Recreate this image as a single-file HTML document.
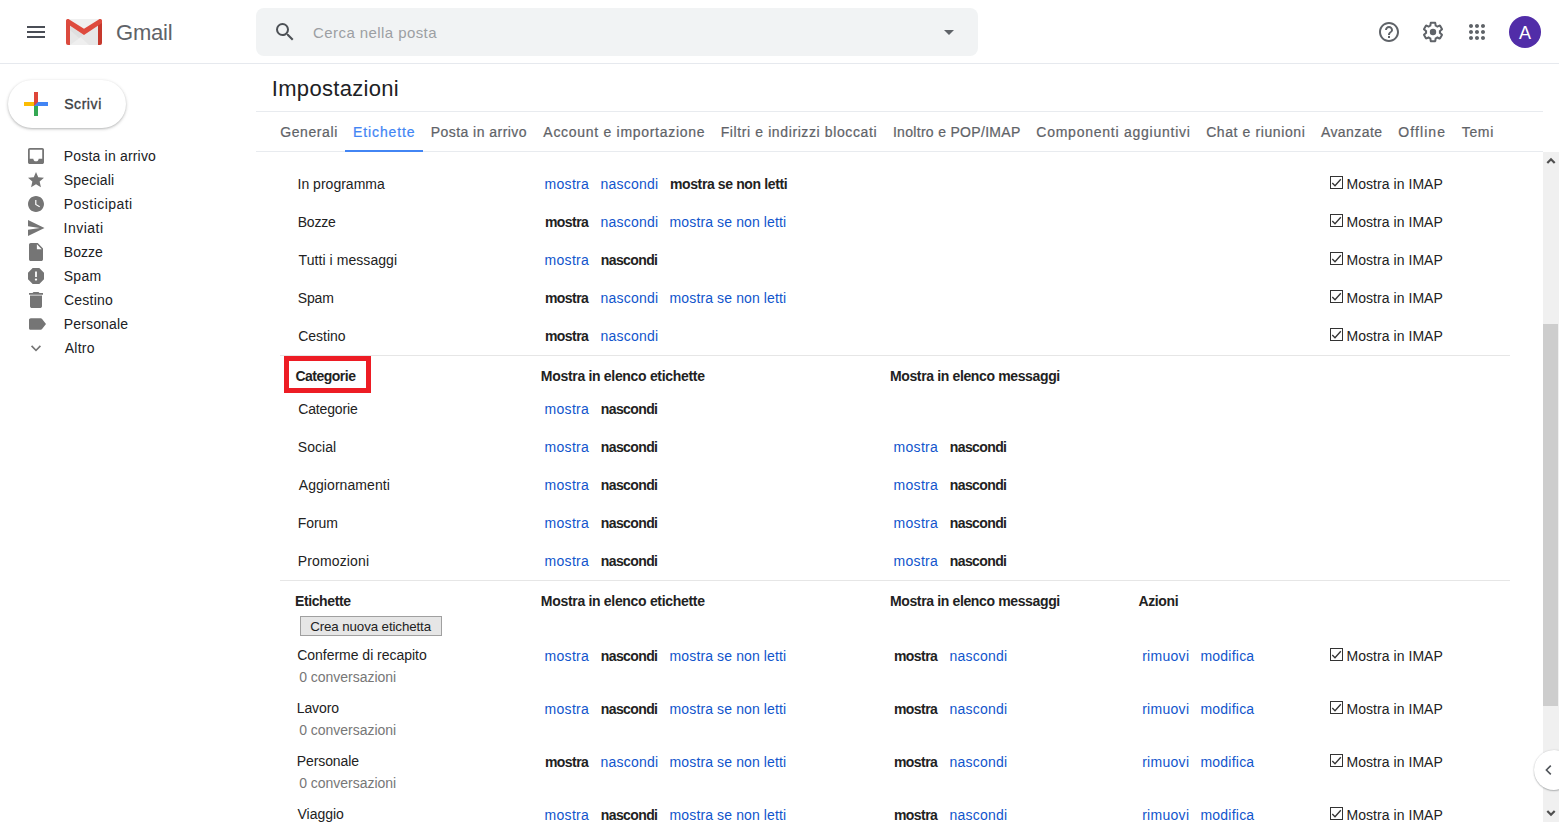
<!DOCTYPE html>
<html lang="it">
<head>
<meta charset="utf-8">
<title>Impostazioni - Gmail</title>
<style>
*{box-sizing:border-box;margin:0;padding:0}
html,body{width:1559px;height:822px;overflow:hidden;background:#fff}
body{position:relative;font-family:"Liberation Sans",Arial,sans-serif;font-size:14px;color:#202124}
.abs{position:absolute}
.t{position:absolute;white-space:nowrap;line-height:20px;height:20px;font-size:14px}
.med{-webkit-text-stroke:0.22px currentColor}
#hdr{position:absolute;left:0;top:0;width:1559px;height:64px;border-bottom:1px solid #e6e9ee}
#search{position:absolute;left:256px;top:8px;width:722px;height:48px;border-radius:8px;background:#f1f3f4}
.c-gm{color:#5f6368}
.c-ph{color:#9c9fa3}
.c-scrivi{color:#3c4043;-webkit-text-stroke:0.35px currentColor}
.c-title{color:#202124}
#avatar{position:absolute;left:1509px;top:16px;width:32px;height:32px;border-radius:50%;background:#512da8;color:#fff;font-size:18px;line-height:32px;text-align:center;padding-top:1px}
#compose{position:absolute;left:8px;top:80px;width:118px;height:48px;border-radius:24px;background:#fff;box-shadow:0 1px 2px 0 rgba(60,64,67,.26),0 1px 3px 1px rgba(60,64,67,.11)}
.nav{color:#202124}
.hl{position:absolute;height:1px;background:#e8ebef}
.tab{color:#5f6368}
.tab.on{color:#4285f4}
#tabline{position:absolute;left:345px;top:150px;width:78px;height:2px;background:#4285f4}
.r{color:#222}
.l{color:#15c}
.b{font-weight:bold;color:#222}
.g{color:#777}
.cb{position:absolute;left:1330px;width:13px;height:13px;border:1px solid #333;background:#fff}
.cb svg{position:absolute;left:-1px;top:-1px}
#newbtn{position:absolute;left:300px;top:616px;width:142px;height:20px;border:1px solid #a0a0a0;background:#e6e6e6}
#redbox{position:absolute;left:284px;top:356px;width:87px;height:37px;border:5px solid #ed1c24}
#sb{position:absolute;left:1543px;top:152px;width:16px;height:670px;background:#f0f0f0}
#thumb{position:absolute;left:0;top:172px;width:15px;height:382px;background:#cdcdcd}
#side{position:absolute;left:1534px;top:750px;width:40px;height:40px;border-radius:20px;background:#fff;box-shadow:0 1px 1.5px 0 rgba(60,64,67,.32),0 0 1.5px 0 rgba(60,64,67,.22)}
</style>
</head>
<body>
<div id="hdr"></div>
<svg class="abs" style="left:24px;top:20px" width="24" height="24" viewBox="0 0 24 24"><path fill="#4a4e56" d="M3 18h18v-2H3v2zm0-5h18v-2H3v2zm0-7v2h18V6H3z"/></svg>
<svg class="abs" style="left:66px;top:19px" width="36" height="26" viewBox="0 0 36 26">
<rect x="0.500" y="0" width="35" height="26" rx="2" fill="#f0f0f0"/>
<path d="M4 6.700 L18 16.100 L32 6.700 V26 H4 Z" fill="#e7e7e7"/>
<path d="M4 7 L17 16 L13 19 L4 11 Z" fill="#dcdcdc" opacity=".7"/>
<path d="M4 26 L14.700 18.300 L23 26 Z" fill="#efefef"/>
<path d="M0 2.200 Q0 0 2.200 0 L4 1.500 V26 H2 Q0 26 0 24 Z" fill="#db4a3e"/>
<path d="M36 2.200 Q36 0 33.800 0 L32 1.500 V26 H34 Q36 26 36 24 Z" fill="#c6392d"/>
<path d="M0.600 0.700 Q1.800 -0.400 3.200 0.500 L18 9.800 L32.800 0.500 Q34.200 -0.400 35.400 0.700 Q36 1.300 36 2.200 L36 4 L18 16.100 L0 4 L0 2.200 Q0 1.300 0.600 0.700 Z" fill="#de4b3e"/>
</svg>
<div id="search"></div>
<svg class="abs" style="left:273px;top:20px" width="24" height="24" viewBox="0 0 24 24"><path fill="#4d5156" d="M15.500 14h-.79l-.28-.27A6.471 6.471 0 0 0 16 9.500 6.500 6.500 0 1 0 9.500 16c1.610 0 3.090-.59 4.230-1.570l.27.28v.79l5 4.990L20.490 19l-4.990-5zm-6 0C7.010 14 5 11.990 5 9.500S7.010 5 9.500 5 14 7.010 14 9.500 11.990 14 9.500 14z"/></svg>
<svg class="abs" style="left:937px;top:20px" width="24" height="24" viewBox="0 0 24 24"><path fill="#5f6368" d="M7 10l5 5 5-5z"/></svg>
<svg class="abs" style="left:1377px;top:20px" width="24" height="24" viewBox="0 0 24 24"><path fill="#5f6368" d="M11 18h2v-2h-2v2zm1-16C6.480 2 2 6.480 2 12s4.480 10 10 10 10-4.480 10-10S17.520 2 12 2zm0 18c-4.410 0-8-3.590-8-8s3.590-8 8-8 8 3.590 8 8-3.590 8-8 8zm0-14c-2.210 0-4 1.790-4 4h2c0-1.100.9-2 2-2s2 .9 2 2c0 2-3 1.750-3 5h2c0-2.250 3-2.500 3-5 0-2.210-1.790-4-4-4z"/></svg>
<svg class="abs" style="left:1421px;top:20px" width="24" height="24" viewBox="0 0 24 24"><path fill="#5f6368" d="M13.850 22.250h-3.700c-.74 0-1.360-.54-1.450-1.270l-.27-1.890c-.27-.14-.53-.29-.79-.46l-1.800.72c-.7.260-1.470-.03-1.810-.65L2.200 15.530c-.35-.66-.2-1.440.36-1.880l1.530-1.190c-.01-.15-.02-.3-.02-.46 0-.15.010-.31.020-.46l-1.520-1.190c-.59-.45-.74-1.260-.37-1.880l1.850-3.190c.34-.62 1.110-.9 1.790-.63l1.810.73c.26-.17.520-.32.780-.46l.27-1.910c.09-.7.710-1.250 1.440-1.250h3.700c.74 0 1.360.54 1.450 1.270l.27 1.890c.27.140.53.290.79.460l1.800-.72c.71-.26 1.480.03 1.820.65l1.840 3.180c.36.660.2 1.440-.36 1.880l-1.520 1.190c.1.150.2.300.2.460s-.1.310-.2.460l1.520 1.190c.56.450.72 1.230.37 1.860l-1.860 3.220c-.34.620-1.110.9-1.800.63l-1.800-.72c-.26.170-.52.320-.78.460l-.27 1.910c-.1.680-.72 1.220-1.460 1.220zm-3.230-2h2.760l.37-2.550.53-.22c.44-.18.880-.44 1.340-.78l.45-.34 2.380.96 1.380-2.400-2.030-1.580.07-.56c.03-.26.060-.51.060-.78s-.03-.53-.06-.78l-.07-.56 2.030-1.580-1.390-2.400-2.390.96-.45-.35c-.42-.32-.87-.58-1.330-.77l-.52-.22-.37-2.550h-2.760l-.37 2.550-.53.210c-.44.190-.88.440-1.340.79l-.45.330-2.380-.95-1.390 2.390 2.030 1.580-.07.560a7 7 0 0 0-.06.790c0 .26.020.53.060.78l.07.560-2.030 1.580 1.380 2.400 2.390-.96.450.35c.43.330.86.580 1.330.77l.53.220.38 2.550z"/><circle fill="#5f6368" cx="12" cy="12" r="3.200"/></svg>
<svg class="abs" style="left:1465px;top:20px" width="24" height="24" viewBox="0 0 24 24"><path fill="#5f6368" d="M6,8c1.100,0 2,-0.900 2,-2s-0.900,-2 -2,-2 -2,0.900 -2,2 0.900,2 2,2zM12,20c1.100,0 2,-0.900 2,-2s-0.900,-2 -2,-2 -2,0.900 -2,2 0.900,2 2,2zM6,20c1.100,0 2,-0.900 2,-2s-0.900,-2 -2,-2 -2,0.900 -2,2 0.900,2 2,2zM6,14c1.100,0 2,-0.900 2,-2s-0.900,-2 -2,-2 -2,0.900 -2,2 0.900,2 2,2zM12,14c1.100,0 2,-0.900 2,-2s-0.900,-2 -2,-2 -2,0.900 -2,2 0.900,2 2,2zM16,6c0,1.100 0.900,2 2,2s2,-0.900 2,-2 -0.900,-2 -2,-2 -2,0.900 -2,2zM12,8c1.100,0 2,-0.900 2,-2s-0.900,-2 -2,-2 -2,0.900 -2,2 0.900,2 2,2zM18,14c1.100,0 2,-0.900 2,-2s-0.900,-2 -2,-2 -2,0.900 -2,2 0.900,2 2,2zM18,20c1.100,0 2,-0.900 2,-2s-0.900,-2 -2,-2 -2,0.900 -2,2 0.900,2 2,2z"/></svg>
<div id="avatar">A</div>

<div id="compose">
<svg class="abs" style="left:16px;top:12px" width="24" height="24" viewBox="0 0 24 24"><path fill="#fbbc04" d="M0 10h10v4H0z"/><path fill="#4285f4" d="M10 10h14v4H10z"/><path fill="#34a853" d="M10 14h4v10h-4z"/><path fill="#de4639" d="M10 0h4v10l-4 4z"/></svg>
</div>
<svg class="abs" style="left:0;top:0" width="60" height="370" viewBox="0 0 60 370" fill="#757575"><path transform="matrix(0.8889 0 0 0.8889 25.333 145.333)" d="M19 3H4.990c-1.110 0-1.980.9-1.980 2L3 19c0 1.100.880 2 1.990 2H19c1.100 0 2-.9 2-2V5c0-1.100-.9-2-2-2zm0 12h-4c0 1.660-1.350 3-3 3s-3-1.340-3-3H4.990V5H19v10z"/><path transform="matrix(0.8000 0 0 0.8000 26.400 170.400)" d="M12 17.270L18.180 21l-1.640-7.030L22 9.240l-7.190-.61L12 2 9.190 8.630 2 9.240l5.460 4.730L5.820 21z"/><path transform="matrix(0.8000 0 0 0.8000 26.400 194.400)" d="M12 2C6.500 2 2 6.500 2 12s4.500 10 10 10 10-4.500 10-10S17.500 2 12 2zm4.200 14.200L11 13V7h1.500v5.200l4.500 2.700-.8 1.300z"/><path transform="matrix(0.7857 0 0 0.8889 26.429 217.333)" d="M2.010 21L23 12 2.010 3 2 10l15 2-15 2z"/><path transform="matrix(0.8750 0 0 0.9000 25.500 241.200)" d="M6 2c-1.100 0-1.990.9-1.990 2L4 20c0 1.100.890 2 1.990 2H18c1.100 0 2-.9 2-2V8l-6-6H6zm7 7V3.500L18.500 9H13z"/><path transform="matrix(0.8889 0 0 0.8889 25.333 265.333)" d="M15.730 3H8.270L3 8.270v7.460L8.270 21h7.460L21 15.730V8.270L15.730 3zM12 17.300c-.72 0-1.300-.58-1.300-1.300 0-.72.580-1.300 1.300-1.300.72 0 1.300.58 1.300 1.300 0 .72-.58 1.300-1.300 1.300zm1-4.300h-2V7h2v6z"/><path transform="matrix(1.0000 0 0 0.8889 24.000 289.333)" d="M6 19c0 1.100.9 2 2 2h8c1.100 0 2-.9 2-2V7H6v12zM19 4h-3.500l-1-1h-5l-1 1H5v2h14V4z"/><path transform="matrix(0.8947 0 0 0.8286 26.316 314.057)" d="M17.630 5.840C17.270 5.330 16.670 5 16 5L5 5.010C3.900 5.010 3 5.900 3 7v10c0 1.100.9 1.990 2 1.990L16 19c.67 0 1.270-.33 1.630-.84L22 12l-4.370-6.160z"/><path transform="matrix(0.8333 0 0 0.8367 26.000 338.113)" d="M16.590 8.590L12 13.170 7.410 8.590 6 10l6 6 6-6z"/></svg>

<div class="hl" style="left:256px;top:111px;width:1287px"></div>
<div class="hl" style="left:256px;top:151px;width:1287px"></div>
<div id="tabline"></div>
<div class="hl" style="left:280px;top:355px;width:1230px;background:#e6e6e6"></div>
<div class="hl" style="left:280px;top:580px;width:1230px;background:#e6e6e6"></div>
<div id="newbtn"></div>
<div class="t c-gm" style="left:116.00px;top:23px;letter-spacing:-0.215px;font-size:22px">Gmail</div>
<div class="t c-ph" style="left:313.08px;top:23px;letter-spacing:0.419px;font-size:15px">Cerca nella posta</div>
<div class="t c-scrivi med" style="left:64.14px;top:94px;letter-spacing:0.583px">Scrivi</div>
<div class="t c-title" style="left:271.81px;top:79px;letter-spacing:0.313px;font-size:22px">Impostazioni</div>
<div class="t nav" style="left:63.76px;top:146px;letter-spacing:0.190px">Posta in arrivo</div>
<div class="t nav" style="left:63.70px;top:170px;letter-spacing:0.215px">Speciali</div>
<div class="t nav" style="left:63.76px;top:194px;letter-spacing:0.467px">Posticipati</div>
<div class="t nav" style="left:63.55px;top:218px;letter-spacing:0.492px">Inviati</div>
<div class="t nav" style="left:63.76px;top:242px;letter-spacing:0.052px">Bozze</div>
<div class="t nav" style="left:63.70px;top:266px;letter-spacing:0.300px">Spam</div>
<div class="t nav" style="left:64.00px;top:290px;letter-spacing:0.214px">Cestino</div>
<div class="t nav" style="left:63.76px;top:314px;letter-spacing:0.154px">Personale</div>
<div class="t nav" style="left:64.65px;top:338px;letter-spacing:0.276px">Altro</div>
<div class="t tab med" style="left:280.17px;top:122px;letter-spacing:0.600px">Generali</div>
<div class="t tab med on" style="left:353.08px;top:122px;letter-spacing:0.881px">Etichette</div>
<div class="t tab med" style="left:430.68px;top:122px;letter-spacing:0.458px">Posta in arrivo</div>
<div class="t tab med" style="left:543.37px;top:122px;letter-spacing:0.706px">Account e importazione</div>
<div class="t tab med" style="left:720.68px;top:122px;letter-spacing:0.609px">Filtri e indirizzi bloccati</div>
<div class="t tab med" style="left:892.89px;top:122px;letter-spacing:0.311px">Inoltro e POP/IMAP</div>
<div class="t tab med" style="left:1036.30px;top:122px;letter-spacing:0.752px">Componenti aggiuntivi</div>
<div class="t tab med" style="left:1206.14px;top:122px;letter-spacing:0.602px">Chat e riunioni</div>
<div class="t tab med" style="left:1320.96px;top:122px;letter-spacing:0.418px">Avanzate</div>
<div class="t tab med" style="left:1398.31px;top:122px;letter-spacing:1.080px">Offline</div>
<div class="t tab med" style="left:1461.79px;top:122px;letter-spacing:0.644px">Temi</div>
<div class="t r" style="left:297.52px;top:174px;letter-spacing:0.011px">In programma</div>
<div class="t l" style="left:544.58px;top:174px;letter-spacing:0.285px">mostra</div>
<div class="t l" style="left:600.42px;top:174px;letter-spacing:0.247px">nascondi</div>
<div class="t b" style="left:669.96px;top:174px;letter-spacing:-0.380px">mostra se non letti</div>
<div class="t r" style="left:1346.53px;top:174px;letter-spacing:0.048px">Mostra in IMAP</div>
<div class="t r" style="left:297.73px;top:212px;letter-spacing:-0.191px">Bozze</div>
<div class="t b" style="left:544.96px;top:212px;letter-spacing:-0.548px">mostra</div>
<div class="t l" style="left:600.42px;top:212px;letter-spacing:0.247px">nascondi</div>
<div class="t l" style="left:669.58px;top:212px;letter-spacing:0.121px">mostra se non letti</div>
<div class="t r" style="left:1346.53px;top:212px;letter-spacing:0.048px">Mostra in IMAP</div>
<div class="t r" style="left:298.57px;top:250px;letter-spacing:0.067px">Tutti i messaggi</div>
<div class="t l" style="left:544.58px;top:250px;letter-spacing:0.285px">mostra</div>
<div class="t b" style="left:600.81px;top:250px;letter-spacing:-0.606px">nascondi</div>
<div class="t r" style="left:1346.53px;top:250px;letter-spacing:0.048px">Mostra in IMAP</div>
<div class="t r" style="left:297.79px;top:288px;letter-spacing:-0.163px">Spam</div>
<div class="t b" style="left:544.96px;top:288px;letter-spacing:-0.548px">mostra</div>
<div class="t l" style="left:600.42px;top:288px;letter-spacing:0.247px">nascondi</div>
<div class="t l" style="left:669.58px;top:288px;letter-spacing:0.121px">mostra se non letti</div>
<div class="t r" style="left:1346.53px;top:288px;letter-spacing:0.048px">Mostra in IMAP</div>
<div class="t r" style="left:298.28px;top:326px;letter-spacing:-0.043px">Cestino</div>
<div class="t b" style="left:544.96px;top:326px;letter-spacing:-0.548px">mostra</div>
<div class="t l" style="left:600.42px;top:326px;letter-spacing:0.247px">nascondi</div>
<div class="t r" style="left:1346.53px;top:326px;letter-spacing:0.048px">Mostra in IMAP</div>
<div class="t b" style="left:295.49px;top:366px;letter-spacing:-0.511px">Categorie</div>
<div class="t b" style="left:540.87px;top:366px;letter-spacing:-0.313px">Mostra in elenco etichette</div>
<div class="t b" style="left:889.96px;top:366px;letter-spacing:-0.361px">Mostra in elenco messaggi</div>
<div class="t r" style="left:298.28px;top:399px;letter-spacing:-0.152px">Categorie</div>
<div class="t l" style="left:544.58px;top:399px;letter-spacing:0.285px">mostra</div>
<div class="t b" style="left:600.81px;top:399px;letter-spacing:-0.606px">nascondi</div>
<div class="t r" style="left:297.79px;top:437px;letter-spacing:0.043px">Social</div>
<div class="t l" style="left:544.58px;top:437px;letter-spacing:0.285px">mostra</div>
<div class="t b" style="left:600.81px;top:437px;letter-spacing:-0.606px">nascondi</div>
<div class="t l" style="left:893.58px;top:437px;letter-spacing:0.285px">mostra</div>
<div class="t b" style="left:949.81px;top:437px;letter-spacing:-0.606px">nascondi</div>
<div class="t r" style="left:298.77px;top:475px;letter-spacing:0.064px">Aggiornamenti</div>
<div class="t l" style="left:544.58px;top:475px;letter-spacing:0.285px">mostra</div>
<div class="t b" style="left:600.81px;top:475px;letter-spacing:-0.606px">nascondi</div>
<div class="t l" style="left:893.58px;top:475px;letter-spacing:0.285px">mostra</div>
<div class="t b" style="left:949.81px;top:475px;letter-spacing:-0.606px">nascondi</div>
<div class="t r" style="left:297.73px;top:513px;letter-spacing:-0.040px">Forum</div>
<div class="t l" style="left:544.58px;top:513px;letter-spacing:0.285px">mostra</div>
<div class="t b" style="left:600.81px;top:513px;letter-spacing:-0.606px">nascondi</div>
<div class="t l" style="left:893.58px;top:513px;letter-spacing:0.285px">mostra</div>
<div class="t b" style="left:949.81px;top:513px;letter-spacing:-0.606px">nascondi</div>
<div class="t r" style="left:297.73px;top:551px;letter-spacing:0.140px">Promozioni</div>
<div class="t l" style="left:544.58px;top:551px;letter-spacing:0.285px">mostra</div>
<div class="t b" style="left:600.81px;top:551px;letter-spacing:-0.606px">nascondi</div>
<div class="t l" style="left:893.58px;top:551px;letter-spacing:0.285px">mostra</div>
<div class="t b" style="left:949.81px;top:551px;letter-spacing:-0.606px">nascondi</div>
<div class="t b" style="left:295.04px;top:591px;letter-spacing:-0.398px">Etichette</div>
<div class="t b" style="left:540.87px;top:591px;letter-spacing:-0.313px">Mostra in elenco etichette</div>
<div class="t b" style="left:889.96px;top:591px;letter-spacing:-0.361px">Mostra in elenco messaggi</div>
<div class="t b" style="left:1138.49px;top:591px;letter-spacing:-0.379px">Azioni</div>
<div class="t r" style="left:310.20px;top:617px;letter-spacing:-0.108px;font-size:13.33px">Crea nuova etichetta</div>
<div class="t r" style="left:297.28px;top:645px;letter-spacing:-0.028px">Conferme di recapito</div>
<div class="t g" style="left:299.19px;top:667px;letter-spacing:-0.025px">0 conversazioni</div>
<div class="t l" style="left:544.58px;top:646px;letter-spacing:0.285px">mostra</div>
<div class="t b" style="left:600.81px;top:646px;letter-spacing:-0.606px">nascondi</div>
<div class="t l" style="left:669.58px;top:646px;letter-spacing:0.121px">mostra se non letti</div>
<div class="t b" style="left:893.96px;top:646px;letter-spacing:-0.548px">mostra</div>
<div class="t l" style="left:949.42px;top:646px;letter-spacing:0.247px">nascondi</div>
<div class="t l" style="left:1142.15px;top:646px;letter-spacing:0.289px">rimuovi</div>
<div class="t l" style="left:1200.42px;top:646px;letter-spacing:0.230px">modifica</div>
<div class="t r" style="left:1346.53px;top:646px;letter-spacing:0.048px">Mostra in IMAP</div>
<div class="t r" style="left:296.73px;top:698px;letter-spacing:-0.111px">Lavoro</div>
<div class="t g" style="left:299.19px;top:720px;letter-spacing:-0.025px">0 conversazioni</div>
<div class="t l" style="left:544.58px;top:699px;letter-spacing:0.285px">mostra</div>
<div class="t b" style="left:600.81px;top:699px;letter-spacing:-0.606px">nascondi</div>
<div class="t l" style="left:669.58px;top:699px;letter-spacing:0.121px">mostra se non letti</div>
<div class="t b" style="left:893.96px;top:699px;letter-spacing:-0.548px">mostra</div>
<div class="t l" style="left:949.42px;top:699px;letter-spacing:0.247px">nascondi</div>
<div class="t l" style="left:1142.15px;top:699px;letter-spacing:0.289px">rimuovi</div>
<div class="t l" style="left:1200.42px;top:699px;letter-spacing:0.230px">modifica</div>
<div class="t r" style="left:1346.53px;top:699px;letter-spacing:0.048px">Mostra in IMAP</div>
<div class="t r" style="left:296.73px;top:751px;letter-spacing:-0.086px">Personale</div>
<div class="t g" style="left:299.19px;top:773px;letter-spacing:-0.025px">0 conversazioni</div>
<div class="t b" style="left:544.96px;top:752px;letter-spacing:-0.548px">mostra</div>
<div class="t l" style="left:600.42px;top:752px;letter-spacing:0.247px">nascondi</div>
<div class="t l" style="left:669.58px;top:752px;letter-spacing:0.121px">mostra se non letti</div>
<div class="t b" style="left:893.96px;top:752px;letter-spacing:-0.548px">mostra</div>
<div class="t l" style="left:949.42px;top:752px;letter-spacing:0.247px">nascondi</div>
<div class="t l" style="left:1142.15px;top:752px;letter-spacing:0.289px">rimuovi</div>
<div class="t l" style="left:1200.42px;top:752px;letter-spacing:0.230px">modifica</div>
<div class="t r" style="left:1346.53px;top:752px;letter-spacing:0.048px">Mostra in IMAP</div>
<div class="t r" style="left:297.56px;top:804px;letter-spacing:-0.033px">Viaggio</div>
<div class="t l" style="left:544.58px;top:805px;letter-spacing:0.285px">mostra</div>
<div class="t b" style="left:600.81px;top:805px;letter-spacing:-0.606px">nascondi</div>
<div class="t l" style="left:669.58px;top:805px;letter-spacing:0.121px">mostra se non letti</div>
<div class="t b" style="left:893.96px;top:805px;letter-spacing:-0.548px">mostra</div>
<div class="t l" style="left:949.42px;top:805px;letter-spacing:0.247px">nascondi</div>
<div class="t l" style="left:1142.15px;top:805px;letter-spacing:0.289px">rimuovi</div>
<div class="t l" style="left:1200.42px;top:805px;letter-spacing:0.230px">modifica</div>
<div class="t r" style="left:1346.53px;top:805px;letter-spacing:0.048px">Mostra in IMAP</div>
<div class="cb" style="top:176px"><svg width="13" height="13" viewBox="0 0 13 13"><path d="M2.300 7 L5 9.800 L10.800 3.300" fill="none" stroke="#333" stroke-width="1.300"/></svg></div>
<div class="cb" style="top:214px"><svg width="13" height="13" viewBox="0 0 13 13"><path d="M2.300 7 L5 9.800 L10.800 3.300" fill="none" stroke="#333" stroke-width="1.300"/></svg></div>
<div class="cb" style="top:252px"><svg width="13" height="13" viewBox="0 0 13 13"><path d="M2.300 7 L5 9.800 L10.800 3.300" fill="none" stroke="#333" stroke-width="1.300"/></svg></div>
<div class="cb" style="top:290px"><svg width="13" height="13" viewBox="0 0 13 13"><path d="M2.300 7 L5 9.800 L10.800 3.300" fill="none" stroke="#333" stroke-width="1.300"/></svg></div>
<div class="cb" style="top:328px"><svg width="13" height="13" viewBox="0 0 13 13"><path d="M2.300 7 L5 9.800 L10.800 3.300" fill="none" stroke="#333" stroke-width="1.300"/></svg></div>
<div class="cb" style="top:648px"><svg width="13" height="13" viewBox="0 0 13 13"><path d="M2.300 7 L5 9.800 L10.800 3.300" fill="none" stroke="#333" stroke-width="1.300"/></svg></div>
<div class="cb" style="top:701px"><svg width="13" height="13" viewBox="0 0 13 13"><path d="M2.300 7 L5 9.800 L10.800 3.300" fill="none" stroke="#333" stroke-width="1.300"/></svg></div>
<div class="cb" style="top:754px"><svg width="13" height="13" viewBox="0 0 13 13"><path d="M2.300 7 L5 9.800 L10.800 3.300" fill="none" stroke="#333" stroke-width="1.300"/></svg></div>
<div class="cb" style="top:807px"><svg width="13" height="13" viewBox="0 0 13 13"><path d="M2.300 7 L5 9.800 L10.800 3.300" fill="none" stroke="#333" stroke-width="1.300"/></svg></div>
<div id="redbox"></div>

<div id="sb"><div id="thumb"></div>
<svg class="abs" style="left:3px;top:4px" width="10" height="10" viewBox="0 0 10 10"><path d="M1.300 7 L5 3.300 L8.700 7" fill="none" stroke="#505050" stroke-width="2.200"/></svg>
<svg class="abs" style="left:3px;top:656px" width="10" height="10" viewBox="0 0 10 10"><path d="M1.300 3 L5 6.700 L8.700 3" fill="none" stroke="#505050" stroke-width="2.200"/></svg>
</div>
<div id="side"><svg class="abs" style="left:9px;top:14px" width="12" height="12" viewBox="0 0 12 12"><path d="M7.800 1.600 L3.400 6 L7.800 10.400" fill="none" stroke="#50545a" stroke-width="1.600"/></svg></div>
</body>
</html>
